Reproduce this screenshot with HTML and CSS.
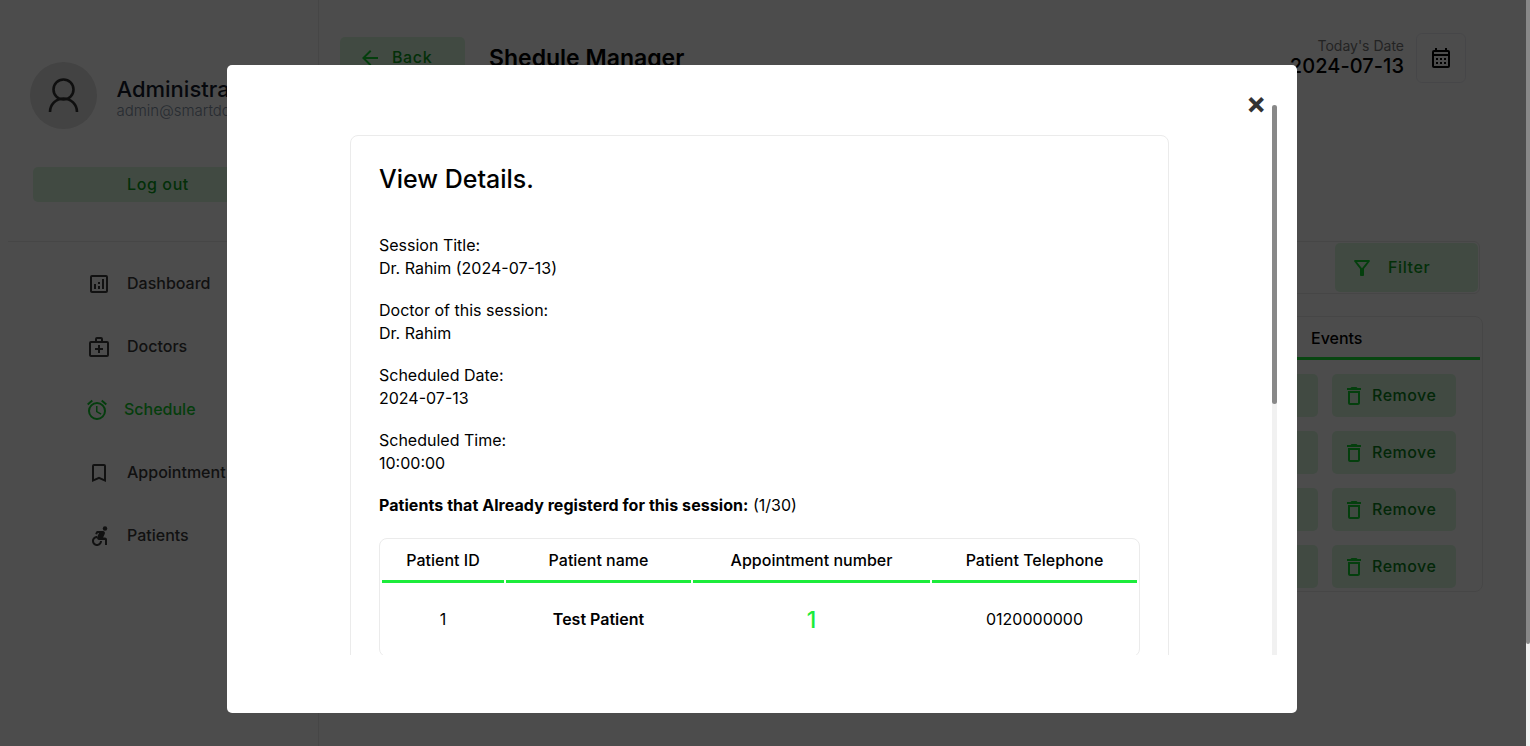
FILE: index.html
```
<!DOCTYPE html>
<html lang="en">
<head>
<meta charset="utf-8">
<title>Schedule</title>
<link rel="stylesheet" href="styles.css">
</head>
<body>
<svg width="0" height="0" class="defs">
  <symbol id="trash" viewBox="0 0 24 24"><path d="M16 9v10H8V9h8m-1.500-6h-5l-1 1H5v2h14V4h-3.500l-1-1zM18 7H6v12c0 1.100.9 2 2 2h8c1.100 0 2-.9 2-2V7z"/></symbol>
</svg>
<div class="page">
  <aside class="sidebar">
    <div class="profile">
      <div class="avatar"><svg viewBox="0 0 67 67" width="67" height="67"><circle cx="33.500" cy="27.500" r="10"/><path d="M20 50a13.500 13.500 0 0 1 27 0"/></svg></div>
      <div class="who"><p class="name">Administrator</p><p class="mail">admin@smartdoc.com</p></div>
    </div>
    <button class="soft logout">Log out</button>
    <nav class="menu">
      <a class="item"><svg viewBox="0 0 24 24"><path d="M19 3H5a2 2 0 0 0-2 2v14c0 1.100.9 2 2 2h14a2 2 0 0 0 2-2V5a2 2 0 0 0-2-2zm0 16H5V5h14v14zM7 12h2v5H7zM15 7h2v10h-2zM11 14h2v3h-2zM11 10h2v2h-2z"/></svg><span>Dashboard</span></a>
      <a class="item"><svg viewBox="0 0 24 24"><path d="M20 6h-4V4a2 2 0 0 0-2-2h-4a2 2 0 0 0-2 2v2H4a2 2 0 0 0-2 2v12c0 1.100.9 2 2 2h16a2 2 0 0 0 2-2V8a2 2 0 0 0-2-2zM10 4h4v2h-4zm10 16H4V8h16zM11 10h2v3h3v2h-3v3h-2v-3H8v-2h3z"/></svg><span>Doctors</span></a>
      <a class="item active"><svg viewBox="0 0 24 24"><path d="M12.500 8H11v6l4.750 2.850.75-1.230-4-2.370zm4.837-6.190l4.607 3.845-1.280 1.535-4.610-3.843zm-10.674 0l1.282 1.536L3.337 7.190l-1.280-1.536zM12 4a9 9 0 1 0 0 18 9 9 0 0 0 0-18zm0 16a7 7 0 1 1 0-14 7 7 0 0 1 0 14z"/></svg><span>Schedule</span></a>
      <a class="item"><svg viewBox="0 0 24 24"><path d="M17 3H7a2 2 0 0 0-2 2v16l7-3 7 3V5a2 2 0 0 0-2-2zm0 15l-5-2.180L7 18V5h10z"/></svg><span>Appointment</span></a>
      <a class="item"><svg viewBox="0 0 24 24"><circle cx="18" cy="4.540" r="2.250"/><path d="M15 17h-2c0 1.650-1.350 3-3 3s-3-1.350-3-3 1.350-3 3-3v-2c-2.760 0-5 2.240-5 5s2.240 5 5 5 5-2.240 5-5zm3-3.500h-1.860l1.670-3.670C18.420 8.500 17.440 7 15.960 7h-5.200c-.81 0-1.540.47-1.870 1.200L8.220 10l1.920.530L10.790 9H12l-1.830 4.100c-.6 1.330.39 2.900 1.850 2.900H18v5h2v-5.500c0-1.100-.9-2-2-2z"/></svg><span>Patients</span></a>
    </nav>
  </aside>
  <main class="main">
    <header class="top">
      <button class="soft back"><svg viewBox="0 0 24 24"><path d="M20 11H7.830l5.590-5.590L12 4l-8 8 8 8 1.410-1.410L7.830 13H20z"/></svg><span>Back</span></button>
      <h1 class="title">Shedule Manager</h1>
      <div class="today"><p class="today-label">Today's Date</p><p class="today-date">2024-07-13</p></div>
      <div class="calendar"><svg viewBox="0 0 24 24"><path d="M19 4h-1V2h-2v2H8V2H6v2H5a2 2 0 0 0-2 2v14c0 1.100.9 2 2 2h14a2 2 0 0 0 2-2V6a2 2 0 0 0-2-2zm0 16H5V10h14zm0-12H5V6h14zM7 12h2v2H7zm4 0h2v2h-2zm4 0h2v2h-2zM7 16h2v2H7zm4 0h2v2h-2zm4 0h2v2h-2z"/></svg></div>
    </header>
    <div class="filters"><button class="soft filter"><svg viewBox="0 0 24 24"><path d="M7 6h10l-5.010 6.300zM4.250 5.610C6.270 8.200 10 13 10 13v6c0 .55.45 1 1 1h2c.55 0 1-.45 1-1v-6s3.720-4.800 5.740-7.390A1 1 0 0 0 18.950 4H5.040a1 1 0 0 0-.79 1.610z"/></svg><span>Filter</span></button></div>
    <section class="sessions">
      <div class="sessions-head">Events</div>
      <div class="sessions-row"><span class="soft view"></span><button class="soft remove"><svg><use href="#trash"/></svg><span>Remove</span></button></div>
      <div class="sessions-row"><span class="soft view"></span><button class="soft remove"><svg><use href="#trash"/></svg><span>Remove</span></button></div>
      <div class="sessions-row"><span class="soft view"></span><button class="soft remove"><svg><use href="#trash"/></svg><span>Remove</span></button></div>
      <div class="sessions-row"><span class="soft view"></span><button class="soft remove"><svg><use href="#trash"/></svg><span>Remove</span></button></div>
    </section>
  </main>
</div>
<div class="overlay">
  <div class="backdrop">
    <div class="popup">
      <div class="scroll">
        <div class="card">
          <h2 class="heading">View Details.</h2>
          <p class="pair">Session Title:<br>Dr. Rahim (2024-07-13)</p>
          <p class="pair">Doctor of this session:<br>Dr. Rahim</p>
          <p class="pair">Scheduled Date:<br>2024-07-13</p>
          <p class="pair">Scheduled Time:<br>10:00:00</p>
          <p class="pair"><b>Patients that Already registerd for this session:</b> (1/30)</p>
          <table class="patients">
            <colgroup><col class="c1"><col class="c2"><col class="c3"><col class="c4"></colgroup>
            <thead><tr><th>Patient ID</th><th>Patient name</th><th>Appointment number</th><th>Patient Telephone</th></tr></thead>
            <tbody><tr><td>1</td><td class="strong">Test Patient</td><td class="number">1</td><td>0120000000</td></tr></tbody>
          </table>
        </div>
      </div>
      <div class="rail"><div class="rail-thumb"></div></div>
      <span class="close">×</span>
    </div>
  </div>
  <div class="page-rail"><div class="page-thumb"></div></div>
</div>
</body>
</html>
```
FILE: styles.css
```
* { box-sizing: border-box; }
body { margin: 0; height: 746px; overflow: hidden; background: #fff; color: #000; font: 16px/23px Inter, "Liberation Sans", sans-serif; }
h1, h2, p { margin: 0; font-weight: 500; }
button { border: 0; font: inherit; }
svg { width: 24px; height: 24px; fill: currentColor; flex: none; }
.defs { position: absolute; }
.page { display: flex; height: 746px; width: 1526px; }
.sidebar { width: 319px; border-right: 1px solid #ebebeb; flex: none; padding-top: 62px; }
.profile { display: flex; padding-left: 30px; height: 105px; overflow: hidden; }
.avatar { width: 67px; height: 67px; border-radius: 50%; background: #dfdfdf; flex: none; }
.avatar svg { width: 67px; height: 67px; fill: none; stroke: #333; stroke-width: 2.600; }
.who { margin: 15px 0 0 19.500px; }
.name { font-size: 22px; line-height: 25px; color: #161c2d; }
.mail { font-size: 15px; line-height: 18px; font-weight: 300; color: #8492a6; }
.soft { display: flex; align-items: center; background: #daf9de; color: #0a9e1c; font-weight: 500; letter-spacing: .6px; border-radius: 5px; padding: 0; }
.soft svg { color: #10d42e; }
.logout { width: 250px; height: 35px; margin-left: 33px; justify-content: center; }
.menu { margin: 39px 0 0 8px; border-top: 1px solid #ebebeb; padding-top: 10px; }
.item { display: flex; align-items: center; height: 63px; gap: 16px; padding-left: 79px; color: #3b3b3b; font-weight: 500; }
.item.active { color: #10cc2c; padding-left: 77px; gap: 15px; }
.main { flex: 1; padding: 33px 43px 0 21px; }
.top { display: flex; height: 50px; align-items: flex-start; padding-right: 17px; }
.back { width: 125px; height: 41px; margin-top: 4px; padding-left: 18px; gap: 10px; }
.title { font-size: 23px; line-height: 28px; font-weight: 600; margin: 11px 0 0 24px; }
.today { margin: 3px 12px 0 auto; text-align: right; }
.today-label { font-size: 14px; line-height: 20px; font-weight: 400; color: #777; }
.today-date { font-size: 20px; line-height: 20px; letter-spacing: .05px; }
.calendar { width: 50px; height: 50px; border: 1px solid #ececf2; border-radius: 6px; display: grid; place-items: center; }
.filters { height: 53px; margin: 158px 3px 0 20px; border: 1px solid #ebebeb; border-radius: 6px; display: flex; justify-content: flex-end; padding: 1px; }
.filter { width: 143px; height: 49px; padding-left: 15px; gap: 14px; }
.sessions { margin: 22px 0 0 20px; height: 276px; border: 1px solid #ebebeb; border-radius: 8px; }
.sessions-head { height: 43px; margin: 0 2px; border-bottom: 3px solid #1cec3b; padding: 10px 0 0 948px; font-weight: 500; }
.sessions-row { display: flex; justify-content: flex-end; gap: 14px; height: 57px; padding: 14px 26px 0 0; }
.view { width: 124px; height: 43px; }
.remove { width: 124px; height: 43px; padding-left: 10px; gap: 6px; color: #0a8420; letter-spacing: .5px; }
.overlay { position: fixed; inset: 0; display: flex; }
.backdrop { flex: 1; background: rgba(0,0,0,.7); padding: 65px 0 0 227px; }
.page-rail { width: 4px; background: #f1f1f1; }
.page-thumb { height: 644px; background: #888; border-radius: 0 0 2px 2px; }
.popup { position: relative; width: 1070px; height: 648px; border-radius: 5px; background: #fff; display: flex; padding: 40px 20px 0 123px; }
.scroll { height: 550px; width: 922px; overflow: hidden; padding-top: 30px; }
.card { width: 819px; height: 700px; border: 1px solid #ebebeb; border-radius: 8px; padding: 28px; }
.heading { font-size: 25px; line-height: 30px; font-weight: 500; margin-bottom: 40px; }
.pair { font-weight: 400; margin-bottom: 19px; }
.pair b { letter-spacing: .055px; }
.rail { width: 5px; height: 550px; background: #f1f1f1; }
.rail-thumb { height: 299px; background: #888; border-radius: 3px; }
.close { position: absolute; left: 1019px; top: 23px; font-size: 30px; line-height: 30px; font-weight: 700; color: #333; }
.patients { width: 761px; height: 118px; table-layout: fixed; border: 1px solid #ebebeb; border-radius: 8px; border-spacing: 2px; text-align: center; margin-top: 21px; }
.c1 { width: 122px; } .c2 { width: 185px; } .c3 { width: 237px; } .c4 { width: 205px; }
.patients th { height: 42px; padding: 0; font-weight: 500; border-bottom: 3px solid #1cec3b; }
.patients td { padding: 0; height: 69px; }
.patients .strong { font-weight: 600; }
.patients .number { font-size: 23px; font-weight: 500; color: #1cec3b; padding-top: 2px; }
```
